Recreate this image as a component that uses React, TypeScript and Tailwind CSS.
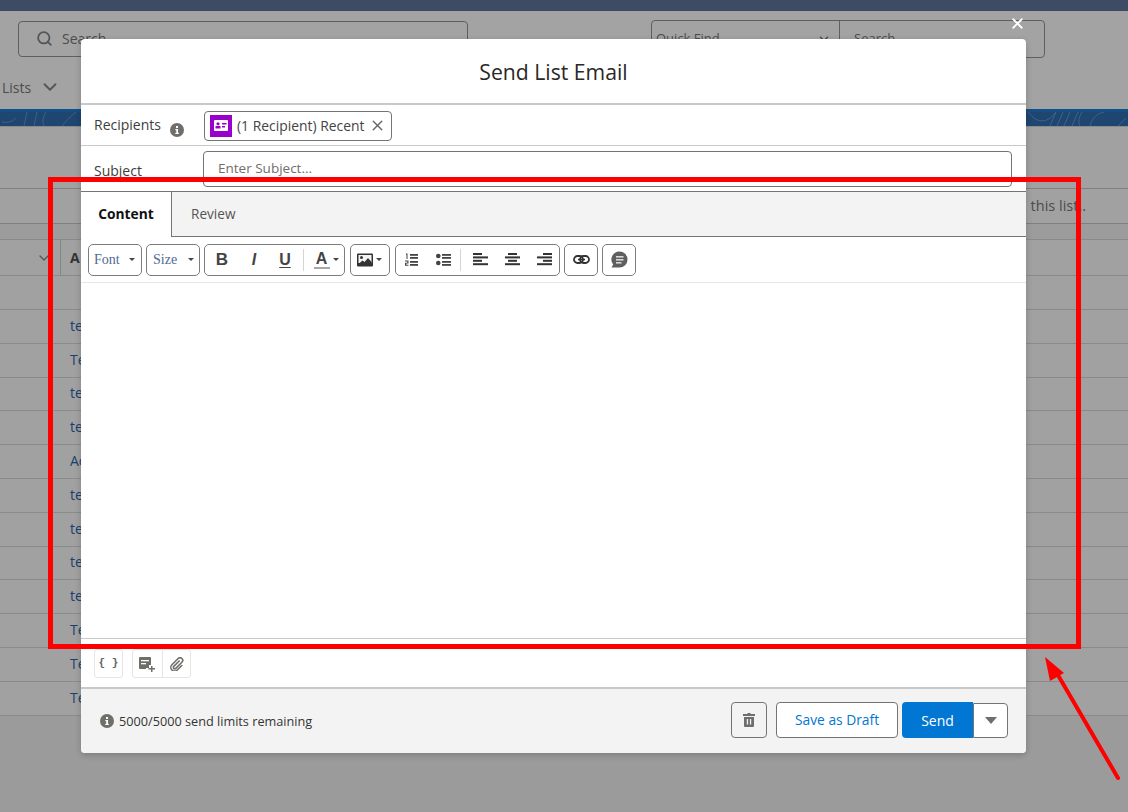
import React from "react";
import { Search, ChevronDown, X } from "lucide-react";

const rows = ["te", "Te", "te", "te", "Ac", "te", "te", "te", "te", "Te", "Te", "Te"];

function Caret({ className = "" }: { className?: string }) {
  return (
    <svg width="6" height="3" viewBox="0 0 6 3" className={className}>
      <path d="M0 0h6L3 3z" fill="#444" />
    </svg>
  );
}

function Info({ size = 14 }: { size?: number }) {
  return (
    <svg width={size} height={size} viewBox="0 0 14 14" className="shrink-0">
      <circle cx="7" cy="7" r="7" fill="#706e6b" />
      <rect x="6" y="3" width="2" height="2" fill="#fff" />
      <path d="M5.400 6h2.600v3.800h.8V11H5.300V9.800h1V7.200h-.9z" fill="#fff" />
    </svg>
  );
}

function Lines({ kind }: { kind: "left" | "center" | "right" }) {
  return (
    <svg width="15" height="13" viewBox="0 0 15 13">
      {[0, 1, 2, 3].map((i) => {
        const width = i % 2 === 0 ? 9 : 15;
        const x = kind === "left" ? 0 : kind === "right" ? 15 - width : (15 - width) / 2;
        return <rect key={i} x={x} y={i * 3.400} width={width} height="2" fill="#333" />;
      })}
    </svg>
  );
}

function Btn({ className = "", children }: { className?: string; children: React.ReactNode }) {
  return (
    <div className={"flex items-center rounded-[5px] border border-[#7d7d7d] bg-white h-[32px] " + className}>
      {children}
    </div>
  );
}

function Toolbar() {
  return (
    <div className="flex h-[46px] shrink-0 items-center gap-[4px] border-b border-[#e4e7ef] pl-[7px]">
      <Btn className="w-[54px] justify-between pl-[5px] pr-[6px]">
        <span className="font-['Liberation_Serif',serif] text-[14px] text-[#4f6a92]">Font</span>
        <Caret />
      </Btn>
      <Btn className="w-[54px] justify-between pl-[6px] pr-[5px]">
        <span className="font-['Liberation_Serif',serif] text-[14px] text-[#4f6a92]">Size</span>
        <Caret />
      </Btn>
      <Btn className="w-[141px] pl-[10px]">
        <span className="w-[14px] text-center font-['Liberation_Sans',sans-serif] text-[17px] font-bold text-[#444]">B</span>
        <span className="ml-[18px] w-[14px] text-center font-['Liberation_Sans',sans-serif] text-[16px] font-bold italic text-[#444]">I</span>
        <span className="ml-[17px] w-[14px] text-center font-['Liberation_Sans',sans-serif] text-[16px] font-bold text-[#444] underline underline-offset-2">U</span>
        <span className="ml-[11px] h-[22px] w-px bg-[#d5d5d5]" />
        <span className="ml-[9px] flex w-[17px] flex-col items-center leading-none">
          <span className="font-['Liberation_Sans',sans-serif] text-[16px] font-bold leading-[15px] text-[#444]">A</span>
          <span className="mt-[1px] h-[2px] w-[16px] bg-[#a8a8a8]" />
        </span>
        <Caret className="ml-[3px]" />
      </Btn>
      <Btn className="ml-[1px] w-[40px] pl-[6px]">
        <svg width="16" height="14" viewBox="0 0 16 14">
          <rect x="0" y="0.500" width="16" height="13" rx="1" fill="#333" />
          <rect x="1.500" y="2" width="13" height="8" fill="#f4f4f4" />
          <circle cx="4.500" cy="4.500" r="1.500" fill="#333" />
          <path d="M1.500 11l4-3.500 2 1.500 3.500-4 3.500 4v2z" fill="#333" />
        </svg>
        <Caret className="ml-[3px]" />
      </Btn>
      <Btn className="ml-[1px] w-[165px] pl-[9px]">
        <svg width="13" height="13" viewBox="0 0 13 13">
          <rect x="5" y="1" width="8" height="1.800" fill="#444" />
          <rect x="5" y="4" width="8" height="1.800" fill="#444" />
          <rect x="5" y="8" width="8" height="1.800" fill="#444" />
          <rect x="5" y="11" width="8" height="1.800" fill="#444" />
          <path d="M1 .5h1.500V6H1.500V1.700H1zM0 7.500h3.500v3H1.300v1.200h2.200v1H0V9.700h2.300V8.500H0z" fill="#444" />
        </svg>
        <svg width="15" height="13" viewBox="0 0 15 13" className="ml-[18px]">
          <circle cx="2.300" cy="3" r="2.300" fill="#444" />
          <circle cx="2.300" cy="10" r="2.300" fill="#444" />
          <rect x="6" y="1" width="9" height="1.800" fill="#444" />
          <rect x="6" y="4" width="9" height="1.800" fill="#444" />
          <rect x="6" y="8" width="9" height="1.800" fill="#444" />
          <rect x="6" y="11" width="9" height="1.800" fill="#444" />
        </svg>
        <span className="ml-[9px] h-[22px] w-px bg-[#d5d5d5]" />
        <span className="ml-[12px] flex"><Lines kind="left" /></span>
        <span className="ml-[17px] flex"><Lines kind="center" /></span>
        <span className="ml-[17px] flex"><Lines kind="right" /></span>
      </Btn>
      <Btn className="w-[34px] justify-center">
        <svg width="17" height="9" viewBox="0 0 17 9">
          <rect x="1" y="1" width="9" height="7" rx="3.500" fill="none" stroke="#333" strokeWidth="1.800" />
          <rect x="7" y="1" width="9" height="7" rx="3.500" fill="none" stroke="#333" strokeWidth="1.800" />
          <rect x="5" y="3.700" width="7" height="1.600" fill="#333" />
        </svg>
      </Btn>
      <Btn className="w-[34px] justify-center">
        <svg width="18" height="18" viewBox="0 0 18 18">
          <path d="M9.500 0.500a8 8 0 0 1 0 16H1.500l1.700-3A8 8 0 0 1 9.500 .5z" fill="#5f5f5f" />
          <rect x="6" y="5" width="7.500" height="1.600" fill="#d8d8d8" />
          <rect x="6" y="8" width="7.500" height="1.600" fill="#d8d8d8" />
          <rect x="6" y="11" width="5.500" height="1.600" fill="#d8d8d8" />
        </svg>
      </Btn>
    </div>
  );
}

function Modal() {
  return (
    <div className="absolute left-[81px] top-[39px] flex h-[714px] w-[945px] flex-col overflow-hidden rounded-[4px] bg-white font-['Open_Sans',sans-serif] text-[#3e3e3c] shadow-[0_2px_6px_rgba(0,0,0,0.2)]">
      <div className="flex h-[66px] shrink-0 items-center justify-center border-b-2 border-[#c9c9c9] pt-[2px]">
        <h1 className="text-[21.200px] leading-none text-[#2b2826]">Send List Email</h1>
      </div>
      <div className="flex h-[41px] shrink-0 items-center border-b border-[#c9c9c9] pl-[13px]">
        <span className="w-[76px] text-[14px] leading-none">Recipients</span>
        <span className="mt-[9px] flex"><Info /></span>
        <div className="mt-[1px] ml-[20px] flex h-[30px] w-[188px] items-center rounded-[4px] border border-[#747474] pl-[5px]">
          <span className="flex h-[22px] w-[22px] shrink-0 items-center justify-center bg-[#9900cc]">
            <svg width="14" height="11" viewBox="0 0 14 11">
              <rect width="14" height="11" rx="1" fill="#fff" />
              <circle cx="4" cy="3.800" r="1.600" fill="#9900cc" />
              <rect x="1.500" y="6" width="5" height="2.500" fill="#9900cc" />
              <rect x="8" y="3" width="4.500" height="1.500" fill="#9900cc" />
              <rect x="8" y="6" width="3" height="1.500" fill="#9900cc" />
            </svg>
          </span>
          <span className="ml-[5px] whitespace-nowrap text-[13.900px] leading-none text-[#444]">(1 Recipient) Recent</span>
          <X size={17} strokeWidth={2} color="#666" className="ml-[5px] shrink-0" />
        </div>
      </div>
      <div className="flex h-[45px] shrink-0 items-start pl-[13px]">
        <span className="mt-[18px] w-[109px] text-[14px] leading-none">Subject</span>
        <div className="mt-[5px] flex h-[36px] w-[809px] items-center rounded-[4px] border border-[#747474] pb-[2px] pl-[14px] text-[13.500px] text-[#706e6b]">
          Enter Subject...
        </div>
      </div>
      <div className="flex h-[46px] shrink-0 border-y border-[#747474] bg-[#f3f3f3]">
        <div className="-mb-px flex h-[45px] w-[91px] items-center justify-center border-r border-[#747474] bg-white text-[13.800px] font-bold text-[#111]">
          Content
        </div>
        <div className="flex items-center pl-[19px] text-[13.600px] text-[#555]">Review</div>
      </div>
      <Toolbar />
      <div className="flex-1 border-b border-[#c9c9c9]" />
      <div className="flex h-[48px] shrink-0 items-start pl-[13px] pt-[10px]">
        <div className="flex h-[29px] w-[29px] items-center justify-center rounded-[3px] border border-[#e6e6e6] font-['Liberation_Mono',monospace] text-[11px] font-bold text-[#666]">
          {"{ }"}
        </div>
        <div className="ml-[9px] flex h-[29px] w-[59px] rounded-[3px] border border-[#e6e6e6]">
          <div className="flex w-[30px] items-center justify-center border-r border-[#e6e6e6]">
            <svg width="17" height="16" viewBox="0 0 17 16">
              <path d="M1 1h10a1 1 0 0 1 1 1v7h-2v3H7v1H1a1 1 0 0 1-1-1V2a1 1 0 0 1 1-1z" fill="#706e6b" />
              <rect x="2" y="4" width="8" height="1.300" fill="#fff" />
              <rect x="2" y="7" width="5" height="1.300" fill="#fff" />
              <path d="M12 10h1.500v2H16v1.500h-2.500V16H12v-2.500H9.500V12H12z" fill="#706e6b" />
            </svg>
          </div>
          <div className="flex flex-1 items-center justify-center">
            <svg width="14" height="14" viewBox="0 0 16 16" fill="none" stroke="#706e6b" strokeWidth="1.800" strokeLinecap="round">
              <path d="M10.500 4.500 4.300 10.700a1.600 1.600 0 0 0 2.300 2.300l7-7a3 3 0 0 0-4.300-4.300L2.200 8.800a4.300 4.300 0 0 0 6.100 6.100l5.200-5.200" />
            </svg>
          </div>
        </div>
      </div>
      <div className="flex h-[66px] shrink-0 items-center border-t-2 border-[#c9c9c9] bg-[#f3f3f3] pl-[19px] pr-[18px]">
        <Info />
        <span className="ml-[5px] text-[12.700px] leading-none text-[#333]">5000/5000 send limits remaining</span>
        <div className="ml-auto flex items-center pb-[2px]">
          <div className="flex h-[36px] w-[36px] items-center justify-center rounded-[4px] border border-[#747474]">
            <svg width="12" height="14" viewBox="0 0 12 14">
              <path d="M4.500 0h3v1H12v2H0V1h4.500zM1 4h10v9a1 1 0 0 1-1 1H2a1 1 0 0 1-1-1z" fill="#706e6b" />
              <rect x="3.800" y="6" width="1.300" height="5.500" fill="#f3f3f3" />
              <rect x="6.900" y="6" width="1.300" height="5.500" fill="#f3f3f3" />
            </svg>
          </div>
          <div className="ml-[9px] flex h-[36px] w-[122px] items-center justify-center rounded-[4px] border border-[#747474] bg-white text-[13.800px] text-[#0176d3]">
            Save as Draft
          </div>
          <div className="ml-[4px] flex h-[36px] w-[71px] items-center justify-center rounded-l-[4px] bg-[#0176d3] text-[14px] text-white">
            Send
          </div>
          <div className="flex h-[35px] w-[35px] items-center justify-center rounded-r-[4px] border border-[#747474] bg-white">
            <svg width="12" height="7" viewBox="0 0 12 7"><path d="M0 0h12L6 7z" fill="#706e6b" /></svg>
          </div>
        </div>
      </div>
    </div>
  );
}

function Background() {
  return (
    <div className="flex h-[812px] w-[1128px] flex-col overflow-hidden bg-[#9b9b9b] font-['Open_Sans',sans-serif] text-[#4c4c4c]">
      <div className="h-[11px] shrink-0 bg-[#3e4b65]" />
      <div className="flex h-[98px] shrink-0 flex-col bg-[#a3a3a3]">
        <div className="flex items-start pl-[18px] pt-[10px]">
          <div className="flex h-[36px] w-[450px] items-center rounded-[4px] border border-[#5f5f5f] pb-[2px] pl-[17px]">
            <Search size={17} strokeWidth={2.500} color="#555" />
            <span className="ml-[9px] text-[14px]">Search</span>
          </div>
          <div className="ml-[183px] flex h-[38px] w-[394px] -translate-y-[1px] rounded-[4px] border border-[#5f5f5f]">
            <div className="flex w-[188px] items-center justify-between border-r border-[#5f5f5f] pl-[4px] pr-[8px] text-[13px]">
              Quick Find
              <ChevronDown size={14} strokeWidth={2.500} />
            </div>
            <div className="flex items-center pl-[14px] text-[13px]">Search</div>
          </div>
        </div>
        <div className="mt-[17px] flex items-center pl-[2px] text-[14px]">
          Lists
          <ChevronDown size={22} strokeWidth={2} color="#555" className="ml-[8px]" />
        </div>
      </div>
      <div className="h-[18px] shrink-0 overflow-hidden border-b border-[#8b8b8b] border-t-[3px] border-t-[#134f86] bg-[#1e4670]">
        <svg width="1128" height="15" fill="none" stroke="#3f6284" strokeWidth="1">
          <path d="M2 10q8 2 14-4M24 14l3-14M34 14l3-14M44 14q-3-6 2-14M62 14q6-8 14-14" />
          <path d="M1028 0q14 18 28 0M1050 14l6-14M1057 14l6-14M1064 14l6-14M1072 14l6-14M1080 14q-3-6 2-14M1090 14q3-12 14-14M1118 14l8-8" />
        </svg>
      </div>
      <div className="h-[61px] shrink-0 bg-[#a1a1a1]" />
      <div className="flex h-[36px] shrink-0 items-center justify-end border-y border-[#808080] bg-[#a1a1a1] pr-[42px] text-[14.500px]">
        this list..
      </div>
      <div className="h-[15px] shrink-0 bg-[#9c9c9c]" />
      <div className="flex h-[37px] shrink-0 items-center border-y border-[#8a8a8a] bg-[#a1a1a1]">
        <ChevronDown size={16} strokeWidth={2} color="#555" className="ml-[36px]" />
        <span className="ml-[8px] h-full w-px bg-[#858585]" />
        <span className="ml-[9px] text-[14px] font-bold text-[#333]">A</span>
      </div>
      <div className="h-[34px] shrink-0 border-b border-[#8a8a8a] bg-[#a1a1a1]" />
      {rows.map((r, i) => (
        <div key={i} className="flex h-[33.800px] shrink-0 items-center border-b border-[#8a8a8a] bg-[#a1a1a1] pb-[2px] pl-[70px] text-[14px] text-[#18406e]">
          {r}
        </div>
      ))}
    </div>
  );
}

export default function App() {
  return (
    <div className="relative h-[812px] w-[1128px] overflow-hidden">
      <Background />
      <X size={17} strokeWidth={2.500} color="#fff" className="absolute left-[1009px] top-[15px]" />
      <Modal />
      <div className="pointer-events-none absolute left-[48px] top-[177px] h-[472px] w-[1033px] border-[5px] border-[#ff0000]" />
      <svg className="pointer-events-none absolute left-0 top-0" width="1128" height="812">
        <line x1="1118" y1="778" x2="1055" y2="670" stroke="#ff0000" strokeWidth="4" strokeLinecap="round" />
        <polygon points="1045,657 1050,681 1064,673" fill="#ff0000" />
      </svg>
    </div>
  );
}
